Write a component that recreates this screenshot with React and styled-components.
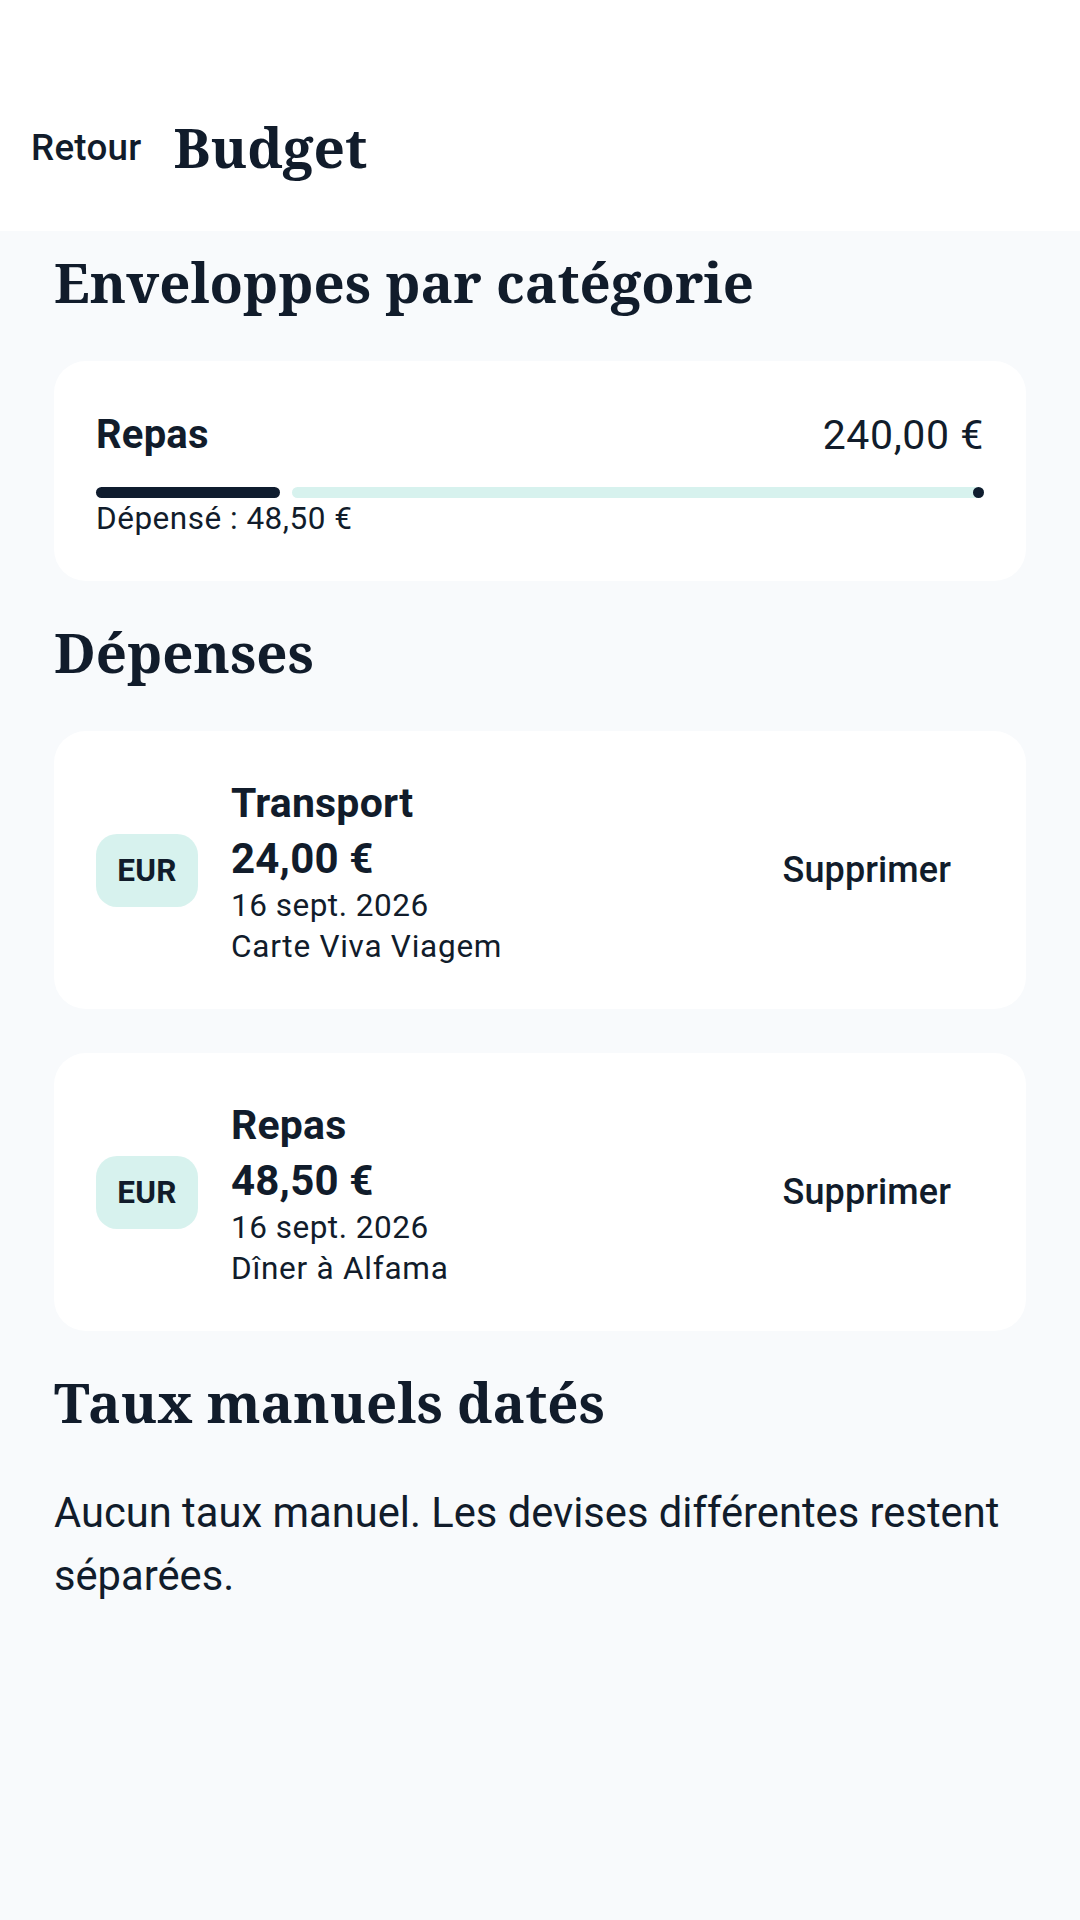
import React from "react";
import styled, { createGlobalStyle } from "styled-components";

const GlobalStyle = createGlobalStyle`
  html, body {
    margin: 0;
    padding: 0;
    background: #f8fafc;
  }
  body {
    font-family: Roboto, "Noto Sans", "Liberation Sans", sans-serif;
    color: #111c2b;
  }
  * { box-sizing: border-box; }
`;

const Page = styled.div`
  min-height: 1920px;
  background: #f8fafc;
  display: flex;
  flex-direction: column;
`;

const Header = styled.header`
  background: #ffffff;
  padding-top: 63px;
`;

const Toolbar = styled.div`
  height: 168px;
  display: flex;
  align-items: center;
`;

const BackButton = styled.button`
  border: none;
  background: transparent;
  padding: 0 32px 0 31px;
  height: 84px;
  font-family: Roboto, "Noto Sans", sans-serif;
  font-weight: 500;
  font-size: 36.75px;
  letter-spacing: 0.26px;
  color: #111c2b;
`;

const PageTitle = styled.h1`
  margin: 0;
  font-family: "Noto Serif", "DejaVu Serif", "Liberation Serif", serif;
  font-weight: 700;
  font-size: 55px;
  line-height: 1.2;
  color: #111c2b;
`;

const Main = styled.main`
  padding: 20px 54px 60px;
  display: flex;
  flex-direction: column;
  gap: 40px;
`;

const SectionTitle = styled.h2`
  margin: 0;
  padding-bottom: 8px;
  font-family: "Noto Serif", "DejaVu Serif", "Liberation Serif", serif;
  font-weight: 700;
  font-size: 54.6px;
  line-height: 62px;
  color: #111c2b;
`;

const Card = styled.div`
  background: #ffffff;
  border-radius: 32px;
  padding: 42px 42px;
`;

const EnvelopeRow = styled.div`
  display: flex;
  justify-content: space-between;
  align-items: center;
  height: 63px;
`;

const EnvelopeName = styled.span`
  font-weight: 700;
  font-size: 40px;
  letter-spacing: 0.2px;
`;

const EnvelopeAmount = styled.span`
  font-weight: 400;
  font-size: 41px;
  letter-spacing: 0.6px;
`;

const Progress = styled.div`
  margin-top: 21px;
  height: 11px;
  display: flex;
  align-items: center;
  gap: 12px;
`;

const ProgressActive = styled.div`
  height: 11px;
  border-radius: 6px;
  background: #0f1c2e;
  flex: none;
`;

const ProgressTrack = styled.div`
  flex: 1;
  height: 11px;
  border-radius: 6px;
  background: #d7f2ee;
  display: flex;
  justify-content: flex-end;
  align-items: center;
`;

const StopDot = styled.span`
  width: 11px;
  height: 11px;
  border-radius: 50%;
  background: #0f1c2e;
`;

const SmallText = styled.div`
  font-size: 31.5px;
  line-height: 41px;
  letter-spacing: ${(p) => (p.$wide ? "0.75px" : "0.5px")};
  color: #111c2b;
`;

const ExpenseList = styled.div`
  display: flex;
  flex-direction: column;
  gap: 44px;
`;

const ExpenseCard = styled(Card)`
  display: flex;
  align-items: center;
`;

const CurrencyChip = styled.span`
  flex: none;
  width: 102px;
  height: 73px;
  border-radius: 21px;
  background: #d7f2ee;
  display: flex;
  align-items: center;
  justify-content: center;
  font-weight: 700;
  font-size: 31.5px;
  letter-spacing: 0.3px;
  color: #111c2b;
`;

const ExpenseInfo = styled.div`
  flex: 1;
  margin-left: 33px;
  display: flex;
  flex-direction: column;
`;

const ExpenseCategory = styled.div`
  font-weight: 700;
  font-size: 41px;
  line-height: 60px;
  letter-spacing: 0.2px;
`;

const ExpenseAmount = styled.div`
  font-weight: 700;
  font-size: 42px;
  line-height: 52px;
  letter-spacing: 0.2px;
`;

const DeleteButton = styled.button`
  border: none;
  background: transparent;
  padding: 20px 33px;
  font-family: Roboto, "Noto Sans", sans-serif;
  font-weight: 500;
  font-size: 36px;
  letter-spacing: 0.1px;
  color: #111c2b;
`;

const BodyText = styled.p`
  margin: 0;
  font-size: 41.7px;
  line-height: 63px;
  letter-spacing: 0;
  color: #111c2b;
`;

const envelope = { name: "Repas", budget: 240, spent: 48.5 };

const expenses = [
  { id: 1, category: "Transport", amount: "24,00 €", date: "16 sept. 2026", memo: "Carte Viva Viagem" },
  { id: 2, category: "Repas", amount: "48,50 €", date: "16 sept. 2026", memo: "Dîner à Alfama" },
];

export default function App() {
  const ratio = envelope.spent / envelope.budget;
  return (
    <>
      <GlobalStyle />
      <Page>
        <Header>
          <Toolbar>
            <BackButton>Retour</BackButton>
            <PageTitle>Budget</PageTitle>
          </Toolbar>
        </Header>
        <Main>
          <SectionTitle>Enveloppes par catégorie</SectionTitle>
          <Card>
            <EnvelopeRow>
              <EnvelopeName>{envelope.name}</EnvelopeName>
              <EnvelopeAmount>240,00 €</EnvelopeAmount>
            </EnvelopeRow>
            <Progress>
              <ProgressActive style={{ width: `calc(${ratio * 100}% + 5px)` }} />
              <ProgressTrack>
                <StopDot />
              </ProgressTrack>
            </Progress>
            <SmallText>Dépensé : 48,50 €</SmallText>
          </Card>

          <SectionTitle>Dépenses</SectionTitle>
          <ExpenseList>
            {expenses.map((e) => (
              <ExpenseCard key={e.id}>
                <CurrencyChip>EUR</CurrencyChip>
                <ExpenseInfo>
                  <ExpenseCategory>{e.category}</ExpenseCategory>
                  <ExpenseAmount>{e.amount}</ExpenseAmount>
                  <SmallText>{e.date}</SmallText>
                  <SmallText $wide>{e.memo}</SmallText>
                </ExpenseInfo>
                <DeleteButton>Supprimer</DeleteButton>
              </ExpenseCard>
            ))}
          </ExpenseList>

          <SectionTitle>Taux manuels datés</SectionTitle>
          <BodyText>Aucun taux manuel. Les devises différentes restent séparées.</BodyText>
        </Main>
      </Page>
    </>
  );
}
